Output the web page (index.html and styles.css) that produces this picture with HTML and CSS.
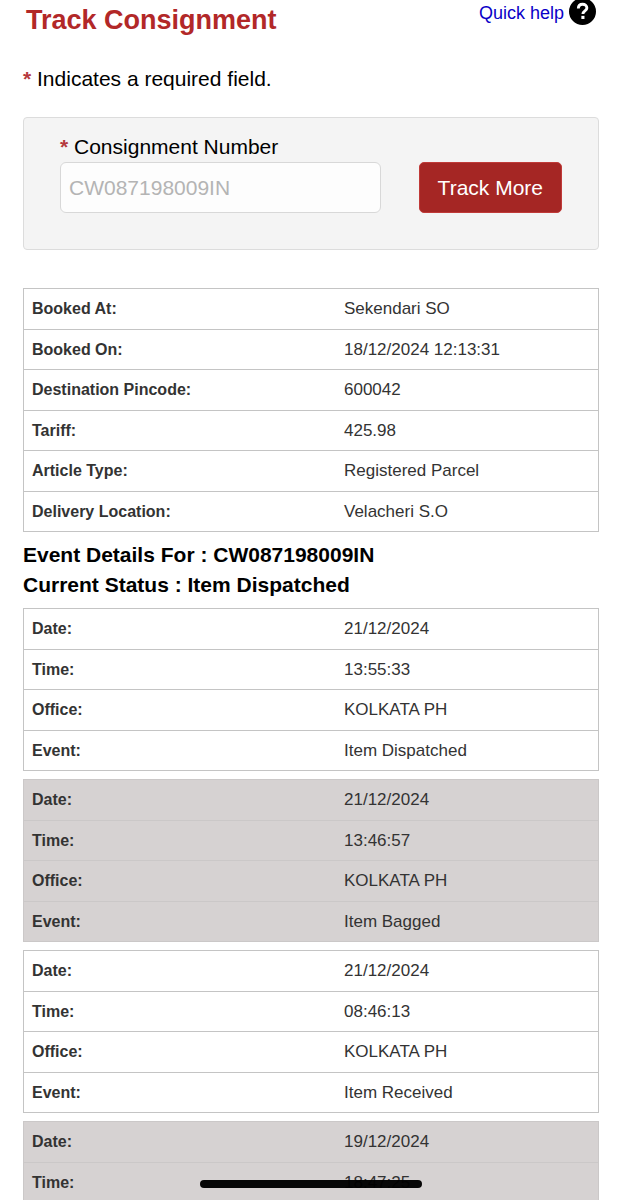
FILE: index.html
```html
<!DOCTYPE html>
<html lang="en">
<head>
    <meta charset="UTF-8">
    <meta name="viewport" content="width=device-width, initial-scale=1.0">
    <title>Track Consignment</title>
    <link rel="stylesheet" href="styles.css">
</head>
<body>
    <main class="page">
        <header class="page-header">
            <h1>Track Consignment</h1>
            <a class="quick-help" href="#help">
                Quick help
                <svg class="help-icon" viewBox="0 0 26 26" aria-hidden="true">
                    <circle cx="13" cy="13" r="13" fill="#000"/>
                    <path d="M9 10.200c0-2.700 1.700-4.200 4.100-4.200s4.100 1.500 4.100 3.600c0 2.900-3.800 2.800-3.800 5.900" fill="none" stroke="#fff" stroke-width="2.800"/>
                    <rect x="11.900" y="17.200" width="3" height="3" fill="#fff"/>
                </svg>
            </a>
        </header>

        <p class="required-note"><span class="required">*</span> Indicates a required field.</p>

        <form class="track-form">
            <div class="field">
                <label for="consignment"><span class="required">*</span> Consignment Number</label>
                <input type="text" id="consignment" placeholder="CW087198009IN">
            </div>
            <button type="submit">Track More</button>
        </form>

        <table class="details">
            <tr><th scope="row">Booked At:</th><td>Sekendari SO</td></tr>
            <tr><th scope="row">Booked On:</th><td>18/12/2024 12:13:31</td></tr>
            <tr><th scope="row">Destination Pincode:</th><td>600042</td></tr>
            <tr><th scope="row">Tariff:</th><td>425.98</td></tr>
            <tr><th scope="row">Article Type:</th><td>Registered Parcel</td></tr>
            <tr><th scope="row">Delivery Location:</th><td>Velacheri S.O</td></tr>
        </table>

        <div class="status">
            <h2>Event Details For : CW087198009IN</h2>
            <h2>Current Status : Item Dispatched</h2>
        </div>

        <div class="events">
            <table class="details">
                <tr><th scope="row">Date:</th><td>21/12/2024</td></tr>
                <tr><th scope="row">Time:</th><td>13:55:33</td></tr>
                <tr><th scope="row">Office:</th><td>KOLKATA PH</td></tr>
                <tr><th scope="row">Event:</th><td>Item Dispatched</td></tr>
            </table>
            <table class="details">
                <tr><th scope="row">Date:</th><td>21/12/2024</td></tr>
                <tr><th scope="row">Time:</th><td>13:46:57</td></tr>
                <tr><th scope="row">Office:</th><td>KOLKATA PH</td></tr>
                <tr><th scope="row">Event:</th><td>Item Bagged</td></tr>
            </table>
            <table class="details">
                <tr><th scope="row">Date:</th><td>21/12/2024</td></tr>
                <tr><th scope="row">Time:</th><td>08:46:13</td></tr>
                <tr><th scope="row">Office:</th><td>KOLKATA PH</td></tr>
                <tr><th scope="row">Event:</th><td>Item Received</td></tr>
            </table>
            <table class="details">
                <tr><th scope="row">Date:</th><td>19/12/2024</td></tr>
                <tr><th scope="row">Time:</th><td>18:47:25</td></tr>
            </table>
        </div>
    </main>

    <div class="home-bar"></div>
</body>
</html>
```

FILE: styles.css
```css
* {
    box-sizing: border-box;
}

body {
    margin: 0;
    background: #fff;
    color: #000;
    font-family: "Liberation Sans", Arial, sans-serif;
    font-size: 21px;
    line-height: 30px;
}

.page {
    height: 100vh;
    overflow: hidden;
    padding: 0 23px;
}

.page-header {
    display: flex;
    justify-content: space-between;
    align-items: flex-start;
    padding: 0 3px;
}

h1 {
    margin: 0;
    font-size: 27px;
    line-height: 40px;
    color: #b22828;
}

.quick-help {
    display: flex;
    align-items: flex-start;
    gap: 5px;
    font-size: 18px;
    line-height: 26px;
    color: #0a00c8;
    text-decoration: none;
}

.help-icon {
    width: 27px;
    height: 27px;
    margin-top: -2px;
}

.required-note {
    margin: 24px 0 23px;
}

.required {
    color: #b5393d;
    font-weight: bold;
}

.track-form {
    display: flex;
    align-items: flex-end;
    gap: 38px;
    padding: 14px 36px 36px;
    background: #f4f4f4;
    border: 1px solid #dcdcdc;
    border-radius: 4px;
}

.field {
    flex: 1;
    min-width: 0;
}

.field label {
    display: block;
}

.field input {
    display: block;
    width: 100%;
    height: 51px;
    padding: 0 8px;
    background: #fdfdfd;
    border: 1px solid #d8d8d8;
    border-radius: 6px;
    font: inherit;
}

.field input::placeholder {
    color: #b4b4b4;
}

button {
    height: 51px;
    padding: 0 18px;
    background: #a52624;
    border: 1px solid #c03a38;
    border-radius: 5px;
    color: #fff;
    font: inherit;
}

.details {
    width: 100%;
    border-collapse: collapse;
    table-layout: fixed;
    border: 1px solid #c4c4c4;
    color: #333;
    font-size: 17px;
    line-height: 24px;
}

.track-form + .details {
    margin-top: 38px;
}

.details th,
.details td {
    padding: 8px;
    border-bottom: 1px solid #c4c4c4;
    text-align: left;
}

.details tr:nth-child(even) > * {
    padding-bottom: 7px;
}

.details th {
    width: 54%;
    font-size: 16px;
}

.details td {
    padding-left: 10px;
}

.status {
    padding: 8px 0;
}

h2 {
    margin: 0;
    font-size: 21px;
    line-height: 30px;
}

.events {
    display: flex;
    flex-direction: column;
    gap: 8px;
}

.events .details:nth-child(even) {
    background: #d6d2d2;
    border-color: #cbc8c8;
}

.events .details:nth-child(even) > tbody > tr > * {
    border-color: #cbc8c8;
}

/* phone home indicator */
.home-bar {
    position: fixed;
    bottom: 12px;
    left: 50%;
    width: 222px;
    height: 8px;
    margin-left: -111px;
    background: rgba(0, 0, 0, 0.97);
    border-radius: 4px;
}
```
